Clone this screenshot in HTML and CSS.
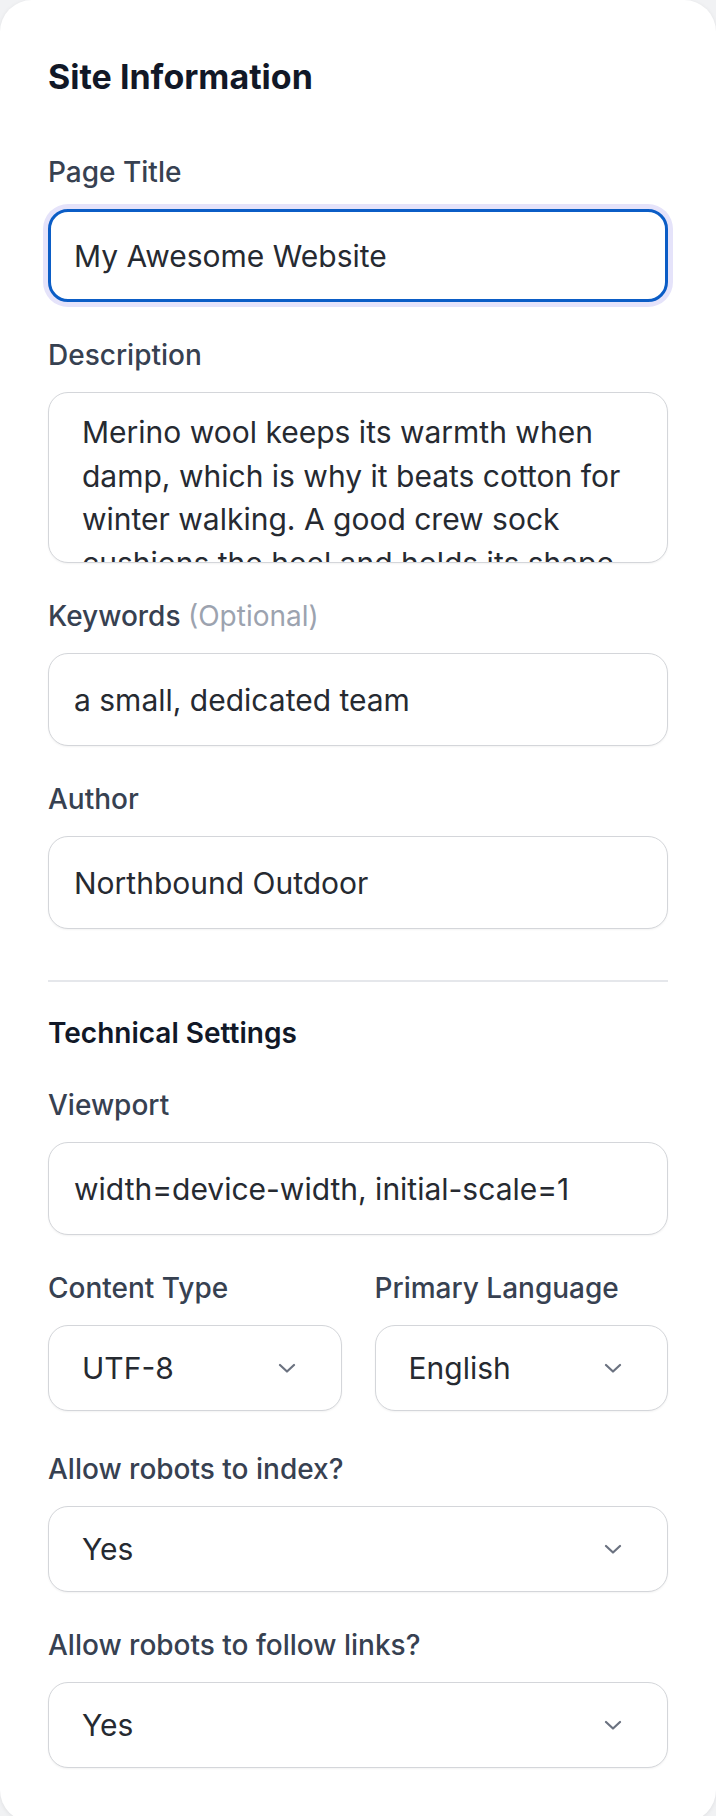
FILE: index.html
```html
<!DOCTYPE html>
<html lang="en">
<head>
<meta charset="utf-8">
<title>Site Information</title>
<link rel="stylesheet" href="styles.css">
</head>
<body>
<main class="card">
  <h2 class="card-title">Site Information</h2>

  <div class="field">
    <label class="label" for="page-title">Page Title</label>
    <input class="input input-focus" id="page-title" type="text" value="My Awesome Website">
  </div>

  <div class="field">
    <label class="label" for="description">Description</label>
    <textarea class="textarea" id="description">Merino wool keeps its warmth when damp, which is why it beats cotton for winter walking. A good crew sock cushions the heel and holds its shape through a long day on the trail.</textarea>
  </div>

  <div class="field">
    <label class="label" for="keywords">Keywords <span class="optional">(Optional)</span></label>
    <input class="input" id="keywords" type="text" value="a small, dedicated team">
  </div>

  <div class="field">
    <label class="label" for="author">Author</label>
    <input class="input" id="author" type="text" value="Northbound Outdoor">
  </div>

  <hr class="divider">

  <h3 class="section-title">Technical Settings</h3>

  <div class="field field-first">
    <label class="label" for="viewport">Viewport</label>
    <input class="input" id="viewport" type="text" value="width=device-width, initial-scale=1">
  </div>

  <div class="field field-row">
    <div class="col">
      <label class="label" for="content-type">Content Type</label>
      <div class="select-wrap">
        <select class="select" id="content-type">
          <option>UTF-8</option>
          <option>ISO-8859-1</option>
        </select>
        <svg class="chevron" viewBox="0 0 18 10" aria-hidden="true"><path d="M2 2l7 6.5 7-6.5"/></svg>
      </div>
    </div>
    <div class="col">
      <label class="label" for="language">Primary Language</label>
      <div class="select-wrap">
        <select class="select" id="language">
          <option>English</option>
          <option>Spanish</option>
        </select>
        <svg class="chevron" viewBox="0 0 18 10" aria-hidden="true"><path d="M2 2l7 6.5 7-6.5"/></svg>
      </div>
    </div>
  </div>

  <div class="field field-after-row">
    <label class="label" for="robots-index">Allow robots to index?</label>
    <div class="select-wrap">
      <select class="select" id="robots-index">
        <option>Yes</option>
        <option>No</option>
      </select>
      <svg class="chevron" viewBox="0 0 18 10" aria-hidden="true"><path d="M2 2l7 6.5 7-6.5"/></svg>
    </div>
  </div>

  <div class="field">
    <label class="label" for="robots-follow">Allow robots to follow links?</label>
    <div class="select-wrap">
      <select class="select" id="robots-follow">
        <option>Yes</option>
        <option>No</option>
      </select>
      <svg class="chevron" viewBox="0 0 18 10" aria-hidden="true"><path d="M2 2l7 6.5 7-6.5"/></svg>
    </div>
  </div>
</main>
</body>
</html>
```

FILE: styles.css
```css
* {
  box-sizing: border-box;
}

html,
body {
  margin: 0;
  padding: 0;
}

body {
  background: #f1f2f4;
  font-family: Inter, "Noto Sans", "Liberation Sans", sans-serif;
  color: #111827;
}

.card {
  background: #ffffff;
  border-radius: 32px;
  padding: 57px 48px 54px;
  box-shadow: 0 1px 4px rgba(0, 0, 0, 0.08);
}

.card-title {
  margin: 0 0 57px;
  font-size: 34px;
  line-height: 40px;
  font-weight: 700;
  color: #111827;
}

.field {
  margin-top: 35px;
}

.card-title + .field {
  margin-top: 0;
}

.field-first {
  margin-top: 36px;
}

.field-after-row {
  margin-top: 40px;
}

.label {
  display: block;
  margin-bottom: 19px;
  font-size: 28px;
  line-height: 36px;
  font-weight: 500;
  color: #374151;
}

.optional {
  font-weight: 400;
  color: #9ca3af;
}

.input,
.textarea,
.select {
  display: block;
  width: 100%;
  margin: 0;
  border: 1px solid #d4d6da;
  border-radius: 20px;
  background: #ffffff;
  font-family: inherit;
  font-size: 30px;
  color: #262a31;
  box-shadow: 0 1px 2px rgba(0, 0, 0, 0.05);
  outline: none;
}

.input {
  height: 93px;
  padding: 0 25px;
}

.input-focus {
  border: 3px solid #0b5dc6;
  padding: 0 23px;
  box-shadow: 0 0 0 5px #e5e3fa;
}

.textarea {
  height: 171px;
  padding: 18px 28px 0 33px;
  line-height: 43.5px;
  resize: none;
  overflow: hidden;
}

.divider {
  margin: 51px 0 0;
  border: 0;
  height: 2px;
  background: #e5e7eb;
}

.section-title {
  margin: 33px 0 0;
  font-size: 28px;
  line-height: 36px;
  font-weight: 600;
  color: #111827;
}

.field-row {
  display: grid;
  grid-template-columns: 1fr 1fr;
  column-gap: 33px;
}

.select-wrap {
  position: relative;
}

.select {
  height: 86px;
  padding: 0 70px 0 33px;
  appearance: none;
  -webkit-appearance: none;
}

.chevron {
  position: absolute;
  right: 46px;
  top: 50%;
  width: 18px;
  height: 10px;
  margin-top: -5px;
  fill: none;
  stroke: #6b7280;
  stroke-width: 2.2;
  stroke-linecap: round;
  stroke-linejoin: round;
  pointer-events: none;
}
```
